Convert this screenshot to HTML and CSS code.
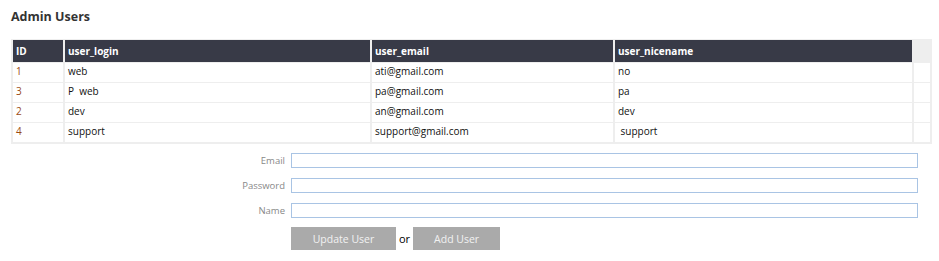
FILE: index.html
```html
<!DOCTYPE html>
<html lang="en">
<head>
    <meta charset="UTF-8">
    <title>Admin Users</title>
    <link rel="stylesheet" href="styles.css">
</head>
<body>
<section class="admin">
    <h2 class="admin-title">Admin Users</h2>

    <table class="users">
        <thead>
        <tr>
            <th class="col-id">ID</th>
            <th class="col-login">user_login</th>
            <th class="col-email">user_email</th>
            <th class="col-nice">user_nicename</th>
            <th class="col-extra"></th>
        </tr>
        </thead>
        <tbody>
        <tr>
            <td class="id">1</td>
            <td>web</td>
            <td>ati@gmail.com</td>
            <td>no</td>
            <td></td>
        </tr>
        <tr>
            <td class="id">3</td>
            <td>P&nbsp; web</td>
            <td>pa@gmail.com</td>
            <td>pa</td>
            <td></td>
        </tr>
        <tr>
            <td class="id">2</td>
            <td>dev</td>
            <td>an@gmail.com</td>
            <td>dev</td>
            <td></td>
        </tr>
        <tr>
            <td class="id">4</td>
            <td>support</td>
            <td>support@gmail.com</td>
            <td>&nbsp;support</td>
            <td></td>
        </tr>
        </tbody>
    </table>

    <form class="user-form">
        <label for="email">Email</label>
        <input id="email" type="text">
        <label for="password">Password</label>
        <input id="password" type="password">
        <label for="name">Name</label>
        <input id="name" type="text">
        <div class="actions">
            <button type="button" class="btn btn-update">Update User</button>
            <span class="or">or</span>
            <button type="button" class="btn btn-add">Add User</button>
        </div>
    </form>
</section>
</body>
</html>
```

FILE: styles.css
```css
* {
    margin: 0;
    padding: 0;
    box-sizing: border-box;
}

body {
    font-family: 'Open Sans', 'Noto Sans', sans-serif;
    font-size: 10px;
    color: #111;
    background: #fff;
}

.admin {
    padding: 8px 11px;
}

.admin-title {
    font-size: 12.5px;
    font-weight: 700;
    color: #333;
    line-height: 18px;
    margin-bottom: 13px;
}

/* Users table */
.users {
    width: 921px;
    border-collapse: separate;
    border-spacing: 2px 1px;
    background: #eee;
    table-layout: fixed;
    border-bottom: 1px solid #eee;
}

.users th {
    background: #383a47;
    color: #fff;
    font-weight: 700;
    text-align: left;
    height: 22px;
    padding: 0 3px;
}

.users th.col-extra {
    background: transparent;
}

.users td {
    background: #fff;
    height: 19px;
    padding: 0 3px;
    line-height: 17px;
    vertical-align: top;
}

.users td.id {
    color: #9a4a12;
}

.col-id { width: 50px; }
.col-login { width: 305px; }
.col-email { width: 241px; }
.col-nice { width: 297px; }
.col-extra { width: 16px; }

/* Form */
.user-form {
    display: grid;
    grid-template-columns: 274px 627px;
    column-gap: 6px;
    row-gap: 10px;
    margin-top: 9px;
    align-items: center;
}

.user-form label {
    text-align: right;
    color: #888;
    font-size: 9.5px;
    line-height: 15px;
}

.user-form input {
    height: 15px;
    border: 1px solid #a9c4e4;
    font-size: 10px;
    outline: none;
}

.actions {
    grid-column: 2;
    display: flex;
    align-items: center;
    gap: 3px;
    margin-top: -1px;
}

.btn {
    height: 23px;
    border: none;
    background: #aaa;
    color: #f2f2f2;
    font-family: inherit;
    font-size: 10.5px;
    cursor: pointer;
}

.btn-update { width: 105px; }
.btn-add { width: 87px; }

.or {
    color: #000;
    font-size: 11px;
}
```
